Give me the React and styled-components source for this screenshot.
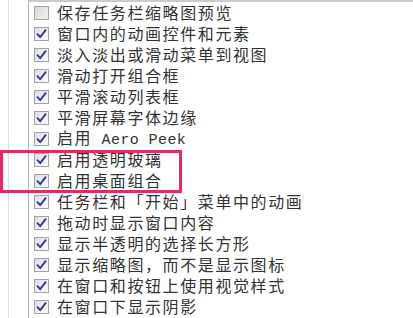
import React from "react";
import styled, { createGlobalStyle } from "styled-components";

const Global = createGlobalStyle`
  html, body { margin: 0; padding: 0; background: #fff; }
  body { width: 413px; height: 318px; overflow: hidden; }
`;

const Page = styled.div`
  position: relative;
  display: flex;
  width: 413px;
  height: 318px;
  background: #fff;
  overflow: hidden;
`;

const Gutter = styled.div`
  width: 28px;
  flex: none;
  display: flex;
  padding-left: 8px;
  box-sizing: border-box;
`;

const GutterLine = styled.div`
  width: 1px;
  background: #dcdcdc;
`;

const ListBox = styled.div`
  flex: 1;
  border-top: 2px solid #cbcbcb;
  border-left: 1px solid #b4b4b4;
  padding-left: 5px;
  display: flex;
  flex-direction: column;
`;

const Row = styled.div`
  height: 21px;
  display: flex;
  align-items: center;
  gap: 8px;
  white-space: nowrap;
`;

const Box = styled.div`
  width: 13px;
  height: 12px;
  flex: none;
  border: 1px solid #a3a3a3;
  background: ${(p) =>
    p.$checked
      ? "linear-gradient(135deg, #dcdcdc 0%, #f3f3f3 60%, #fafafa 100%)"
      : "linear-gradient(135deg, #d8d8d8 0%, #e9e9e9 60%, #f0f0f0 100%)"};
  display: flex;
  align-items: center;
  justify-content: center;
`;

const Label = styled.span`
  font-family: "Noto Sans CJK SC", "Noto Sans", sans-serif;
  font-size: 16px;
  letter-spacing: 1.6px;
  color: #333;
  line-height: 17px;
`;

const Mono = styled.span`
  font-family: "Liberation Mono", "DejaVu Sans Mono", monospace;
  font-size: 15px;
  letter-spacing: 0.4px;
`;

const Highlight = styled.div`
  position: absolute;
  left: 0;
  top: 150px;
  width: 182px;
  height: 43px;
  box-sizing: border-box;
  border: 3px solid #e8295f;
  pointer-events: none;
`;

const Check = () => (
  <svg width="11" height="10" viewBox="0 0 11 10">
    <path
      d="M1.5 5.2 L4.2 8.2 L9.6 1.2"
      fill="none"
      stroke="#2a3aa0"
      strokeWidth="1.9"
      strokeLinecap="round"
      strokeLinejoin="round"
    />
  </svg>
);

const items = [
  { t: "保存任务栏缩略图预览", c: false },
  { t: "窗口内的动画控件和元素", c: true },
  { t: "淡入淡出或滑动菜单到视图", c: true },
  { t: "滑动打开组合框", c: true },
  { t: "平滑滚动列表框", c: true },
  { t: "平滑屏幕字体边缘", c: true },
  { t: "启用", m: " Aero Peek", c: true },
  { t: "启用透明玻璃", c: true },
  { t: "启用桌面组合", c: true },
  { t: "任务栏和「开始」菜单中的动画", c: true },
  { t: "拖动时显示窗口内容", c: true },
  { t: "显示半透明的选择长方形", c: true },
  { t: "显示缩略图，而不是显示图标", c: true },
  { t: "在窗口和按钮上使用视觉样式", c: true },
  { t: "在窗口下显示阴影", c: true },
];

export default function App() {
  return (
    <Page>
      <Global />
      <Gutter>
        <GutterLine />
      </Gutter>
      <ListBox>
        {items.map((it, i) => (
          <Row key={i}>
            <Box $checked={it.c}>{it.c && <Check />}</Box>
            <Label>
              {it.t}
              {it.m && <Mono>{it.m}</Mono>}
            </Label>
          </Row>
        ))}
      </ListBox>
      <Highlight />
    </Page>
  );
}
